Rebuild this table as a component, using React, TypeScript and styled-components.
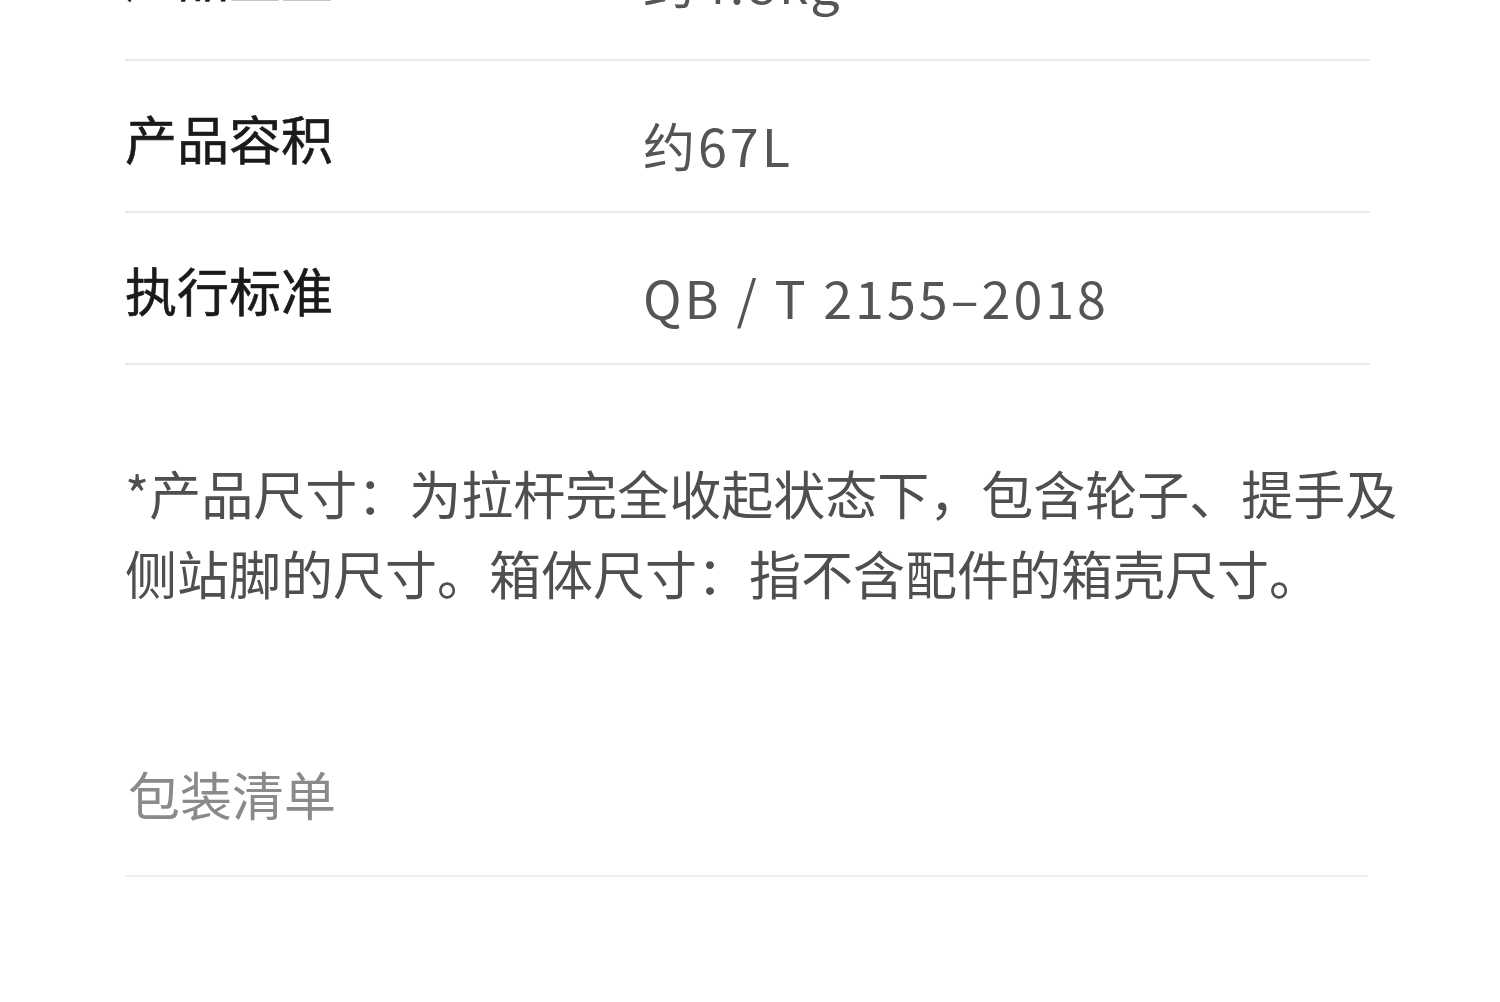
import React from "react";
import styled, { createGlobalStyle } from "styled-components";

const GlobalStyle = createGlobalStyle`
  html, body {
    margin: 0;
    padding: 0;
    background: #ffffff;
    overflow: hidden;
  }
  body {
    font-family: "Noto Sans CJK SC", "Noto Sans", sans-serif;
  }
`;

const Page = styled.div`
  width: 1500px;
  height: 1002px;
  overflow: hidden;
  background: #ffffff;
`;

// the first row is scrolled half out of view
const Content = styled.div`
  margin-top: -96px;
  padding: 0 130px 0 125px;
`;

const SpecList = styled.div`
  display: flex;
  flex-direction: column;
`;

const SpecRow = styled.div<{ $first?: boolean }>`
  display: grid;
  grid-template-columns: 518px 1fr;
  align-items: center;
  height: ${(p) => (p.$first ? 157 : 152)}px;
  padding: ${(p) => (p.$first ? "0 0 14px" : "3px 0 0")};
  box-sizing: border-box;
  border-bottom: 2px solid #e9e9e9;
  font-size: 52px;
  line-height: 1;
`;

const SpecLabel = styled.span`
  color: #1a1a1a;
  font-weight: 400;
  -webkit-text-stroke: 0.6px #1a1a1a;
`;

const SpecValue = styled.span`
  padding-top: 14px;
  color: #555555;
  font-weight: 400;
  letter-spacing: 3px;
`;

const Note = styled.p`
  margin: 88px 0 0;
  width: 1275px;
  font-size: 52px;
  line-height: 80px;
  color: #4f4f4f;
`;

const Section = styled.div`
  margin-top: 141px;
  padding: 0 0 41px 3px;
  border-bottom: 2px solid #eeeeee;
  width: 1240px;
`;

const SectionTitle = styled.h3`
  margin: 0;
  font-size: 52px;
  line-height: 80px;
  font-weight: 400;
  color: #8a8a8a;
`;

const specs = [
  { label: "产品重量", value: "约4.8kg" },
  { label: "产品容积", value: "约67L" },
  { label: "执行标准", value: "QB / T 2155–2018" },
];

const App = () => (
  <Page>
    <GlobalStyle />
    <Content>
      <SpecList>
        {specs.map((s, i) => (
          <SpecRow key={s.label} $first={i === 0}>
            <SpecLabel>{s.label}</SpecLabel>
            <SpecValue>{s.value}</SpecValue>
          </SpecRow>
        ))}
      </SpecList>
      <Note>
        *产品尺寸：为拉杆完全收起状态下，包含轮子、提手及侧站脚的尺寸。箱体尺寸：指不含配件的箱壳尺寸。
      </Note>
      <Section>
        <SectionTitle>包装清单</SectionTitle>
      </Section>
    </Content>
  </Page>
);

export default App;
